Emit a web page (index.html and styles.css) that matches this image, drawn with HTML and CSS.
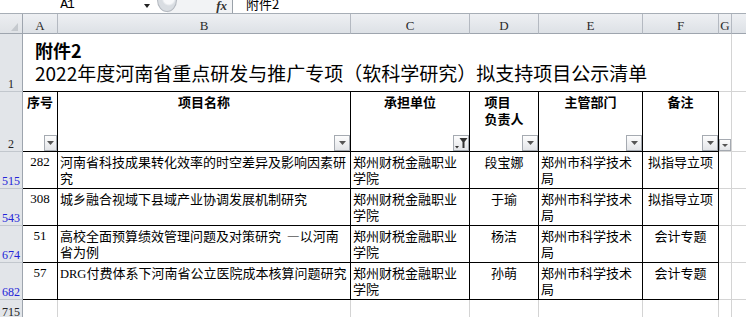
FILE: index.html
```html
<!DOCTYPE html>
<html lang="zh-CN">
<head>
<meta charset="utf-8">
<title>附件2</title>
<link rel="stylesheet" href="styles.css">
</head>
<body>
<div class="fbar">
  <div class="namebox">A1</div>
  <div class="nb-arrow"></div>
  <div class="fx-area">
    <div class="fx-knob"></div>
    <div class="fx">fx</div>
  </div>
  <div class="fcontent">附件2</div>
</div>

<div class="sheet">
  <div class="corner"><svg width="7" height="8" viewBox="0 0 7 8"><polygon points="7,0 7,8 0,8" fill="#c5c9ce"/></svg></div>
  <div class="ch">A</div>
  <div class="ch">B</div>
  <div class="ch">C</div>
  <div class="ch">D</div>
  <div class="ch">E</div>
  <div class="ch">F</div>
  <div class="ch">G</div>
  <div class="ch rest"></div>

  <div class="rh">1</div>
  <div class="c title">
    <div class="t1">附件2</div>
    <div class="t2">2022年度河南省重点研发与推广专项（软科学研究）拟支持项目公示清单</div>
  </div>
  <div class="c"></div>
  <div class="c rest"></div>

  <div class="rh">2</div>
  <div class="c k hd">序号<span class="fb fb-a"><svg width="7" height="4" viewBox="0 0 7 4"><path d="M0 0h7L3.5 4z" fill="#555"/></svg></span></div>
  <div class="c k hd">项目名称<span class="fb"><svg width="7" height="4" viewBox="0 0 7 4"><path d="M0 0h7L3.5 4z" fill="#555"/></svg></span></div>
  <div class="c k hd">承担单位<span class="fb"><svg width="14" height="12" viewBox="0 0 14 12"><path d="M1 9h4L3 11.5z" fill="#333"/><path d="M5.5 1h8l-3 4v6h-2V5z" fill="#333"/></svg></span></div>
  <div class="c k hd"><span class="two">项目<br>负责人</span><span class="fb"><svg width="7" height="4" viewBox="0 0 7 4"><path d="M0 0h7L3.5 4z" fill="#555"/></svg></span></div>
  <div class="c k hd">主管部门<span class="fb"><svg width="7" height="4" viewBox="0 0 7 4"><path d="M0 0h7L3.5 4z" fill="#555"/></svg></span></div>
  <div class="c k hd">备注<span class="fb"><svg width="7" height="4" viewBox="0 0 7 4"><path d="M0 0h7L3.5 4z" fill="#555"/></svg></span></div>
  <div class="c g"><span class="fb fb-g"><svg width="6" height="3" viewBox="0 0 6 3"><path d="M0 0h6L3 3z" fill="#555"/></svg></span></div>
  <div class="c rest"></div>

  <div class="rh f">515</div>
  <div class="c k num">282</div>
  <div class="c k">河南省科技成果转化效率的时空差异及影响因素研<br>究</div>
  <div class="c k">郑州财税金融职业<br>学院</div>
  <div class="c k ctr">段宝娜</div>
  <div class="c k pl">郑州市科学技术<br>局</div>
  <div class="c k ctr">拟指导立项</div>
  <div class="c"></div>
  <div class="c rest"></div>

  <div class="rh f">543</div>
  <div class="c k num">308</div>
  <div class="c k">城乡融合视域下县域产业协调发展机制研究</div>
  <div class="c k">郑州财税金融职业<br>学院</div>
  <div class="c k ctr">于瑜</div>
  <div class="c k pl">郑州市科学技术<br>局</div>
  <div class="c k ctr">拟指导立项</div>
  <div class="c"></div>
  <div class="c rest"></div>

  <div class="rh f">674</div>
  <div class="c k num">51</div>
  <div class="c k">高校全面预算绩效管理问题及对策研究&nbsp;&nbsp;—以河南<br>省为例</div>
  <div class="c k">郑州财税金融职业<br>学院</div>
  <div class="c k ctr">杨洁</div>
  <div class="c k pl">郑州市科学技术<br>局</div>
  <div class="c k ctr">会计专题</div>
  <div class="c"></div>
  <div class="c rest"></div>

  <div class="rh f">682</div>
  <div class="c k num">57</div>
  <div class="c k"><span class="lat">DRG</span>付费体系下河南省公立医院成本核算问题研究</div>
  <div class="c k">郑州财税金融职业<br>学院</div>
  <div class="c k ctr">孙萌</div>
  <div class="c k pl">郑州市科学技术<br>局</div>
  <div class="c k ctr">会计专题</div>
  <div class="c"></div>
  <div class="c rest"></div>

  <div class="rh">715</div>
  <div class="c"></div>
  <div class="c"></div>
  <div class="c"></div>
  <div class="c"></div>
  <div class="c"></div>
  <div class="c"></div>
  <div class="c"></div>
  <div class="c rest"></div>
</div>
</body>
</html>
```
FILE: styles.css
```css
html, body {
  margin: 0;
  padding: 0;
}
body {
  width: 746px;
  height: 317px;
  overflow: hidden;
  background: #fff;
  color: #000;
  font-family: "Noto Sans CJK SC", "Noto Sans", sans-serif;
}

/* formula bar */
.fbar {
  display: flex;
  height: 13px;
  border-bottom: 1px solid #a7aeb6;
  overflow: hidden;
  background: #fff;
}
.namebox {
  width: 134px;
  text-align: center;
  font: 13px/12px "Liberation Mono", monospace;
  letter-spacing: -1px;
  margin-top: -1px;
}
.nb-arrow {
  width: 0;
  height: 0;
  border-left: 3px solid transparent;
  border-right: 3px solid transparent;
  border-top: 4px solid #222;
  margin: 4px 0 0 10px;
}
.fx-area {
  display: flex;
  width: 76px;
  margin-left: 7px;
  box-sizing: border-box;
  border-right: 1px solid #9aa1a9;
  background: linear-gradient(to right, transparent 10px, #f2f3f5 10px);
}
.fx-knob {
  width: 20px;
  height: 24px;
  margin-top: -12px;
  box-sizing: border-box;
  border: 1px solid #b3b8bf;
  border-radius: 50%;
  background: radial-gradient(circle at 60% 45%, #f7f8fa 0 5px, #d9dde2 7px);
}
.fx {
  margin-left: auto;
  padding-right: 5px;
  font: italic bold 13px/11px "Liberation Serif", serif;
  color: #333;
}
.fcontent {
  padding-left: 13px;
  font-size: 13px;
  line-height: 13px;
  margin-top: -3px;
}

/* sheet grid */
.sheet {
  display: grid;
  grid-template-columns: 23px 35px 293px 119px 69px 104px 76px 13px 1fr;
  grid-template-rows: 20px 58px 60px 37px 37px 37px 37px 20px;
}
.sheet > div {
  box-sizing: border-box;
}
.corner {
  background: linear-gradient(#eceef1, #dfe2e6);
  border-right: 1px solid #9ea5ae;
  border-bottom: 1px solid #9ea5ae;
  display: flex;
  justify-content: flex-end;
  align-items: flex-end;
  padding: 0 4px 2px 0;
}
.ch {
  background: linear-gradient(#eef0f3, #dde1e6);
  border-right: 1px solid #b4b9c1;
  border-bottom: 1px solid #9ea5ae;
  display: flex;
  justify-content: center;
  align-items: flex-end;
  font: 13px/14px "Liberation Serif", serif;
  color: #2b2b2b;
}
.ch.rest {
  border-right: none;
}
.rh {
  background: #e2e5e9;
  border-right: 1px solid #9ea5ae;
  border-bottom: 1px solid #c2c7cd;
  display: flex;
  justify-content: center;
  align-items: flex-end;
  font: 12px/14px "Liberation Serif", serif;
  color: #222;
}
.rh.f {
  color: #2424d8;
}

.c {
  position: relative;
  border-right: 1px solid #d4d4d4;
  border-bottom: 1px solid #d4d4d4;
  font-size: 13px;
  line-height: 16px;
  padding: 2px 0 0 2px;
  white-space: nowrap;
  overflow: hidden;
}
.c.rest {
  border-right: none;
}
.c.k {
  border-right-color: #000;
  border-bottom-color: #000;
}
.title {
  grid-column: span 6;
  border-right: none;
  border-bottom-color: #000;
  padding: 5px 0 0 12px;
  overflow: visible;
}
.t1 {
  font-size: 18px;
  line-height: 22px;
  font-weight: bold;
}
.t2 {
  font-size: 19px;
  line-height: 24px;
}
.hd {
  font-weight: bold;
  text-align: center;
  line-height: 17px;
  padding: 1px 0 0 0;
}
.two {
  display: inline-block;
  text-align: left;
}
.num {
  text-align: center;
  padding-left: 0;
  font-family: "Liberation Serif", serif;
}
.ctr {
  text-align: center;
  padding-left: 0;
}
.pl {
  padding-left: 2px;
}
.lat {
  font-family: "Liberation Serif", serif;
  font-size: 12.5px;
}

/* filter buttons */
.fb {
  position: absolute;
  right: 0;
  bottom: 0;
  width: 16px;
  height: 16px;
  box-sizing: border-box;
  border: 1px solid #a5aab1;
  background: linear-gradient(#fdfdfd, #e3e5e8);
  display: flex;
  align-items: center;
  justify-content: center;
}
.fb-a {
  width: 13px;
}
.fb-g {
  width: 12px;
  height: 12px;
}
```
